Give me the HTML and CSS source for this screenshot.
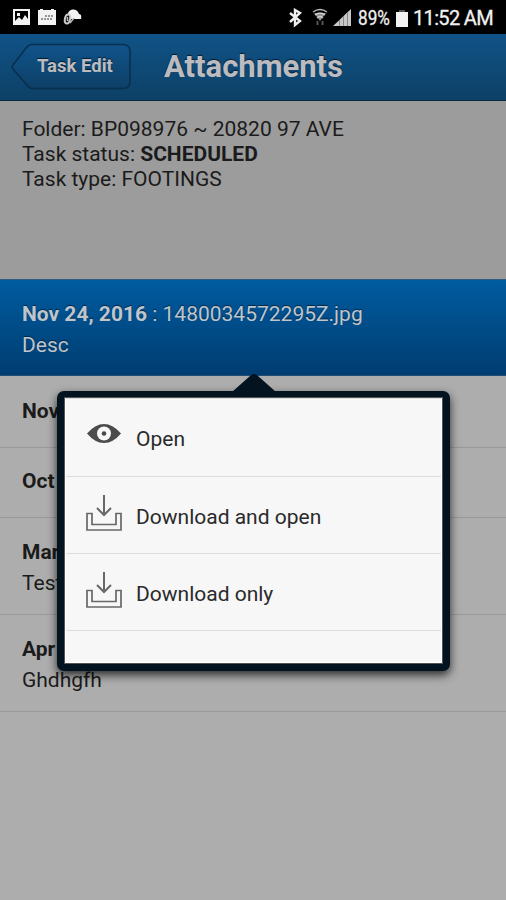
FILE: index.html
```html
<!DOCTYPE html>
<html lang="en">
<head>
<meta charset="utf-8">
<title>Attachments</title>
<link rel="stylesheet" href="styles.css">
</head>
<body>
<div class="screen">
  <div class="status">
    <svg class="status-left" width="72" height="20" viewBox="0 0 72 20">
      <path fill="#f2f2f2" fill-rule="evenodd" d="M0 0h17v16H0zM2 2v10l4-4 3 3 3-5 3 4V2zM4 4h3v3H4z"/>
      <path fill="#f2f2f2" d="M25 1h2V0h3v1h8V0h3v1h2v15H25z"/>
      <path stroke="#777" stroke-width="1.600" stroke-dasharray="2 1" d="M32 7h8M28 10h11"/>
      <path fill="#f2f2f2" d="M55 5c0-5 9-7 11 0q3 0 2 5H58z"/>
      <ellipse cx="54.500" cy="10" rx="2.600" ry="4.500" fill="#111" stroke="#ccc" stroke-width="2" transform="rotate(12 54.500 10)"/>
      <path fill="none" stroke="#bbb" stroke-width="1.500" d="M57 14l4-5M54.500 8v4"/>
    </svg>
    <div class="status-right">
      <svg width="62" height="20" viewBox="0 0 62 20">
        <path fill="none" stroke="#eee" stroke-width="2.400" d="M1 5l10 8-5 4V2l5 3L1 14"/>
        <path fill="none" stroke="#bbb" stroke-width="1.300" d="M24 4q7-5 14 0M26 7q5-4 10 0M28 10q3-3 6 0"/>
        <path fill="#ddd" d="M25 5h12l-6 8z" opacity=".65"/>
        <path stroke="#555" stroke-width="2" d="M28.500 13v4M33.500 13v4"/>
        <path fill="#c8c8c8" d="M44 18L62 1v17z"/>
        <path stroke="#888" stroke-width="1" d="M50.500 12v6M54.500 8v10M58.500 5v13"/>
      </svg>
      <span class="battery-text"><span class="condensed">89%</span></span>
      <svg class="battery" width="12" height="17" viewBox="0 0 12 17"><path fill="#555" d="M3 0h6v2H3z"/><path fill="#f2f2f2" d="M0 2h12v15H0z"/></svg>
      <span class="clock">11:52 AM</span>
    </div>
  </div>
  <header class="header">
    <div class="back">
      <svg class="back-shape" width="122" height="48" viewBox="0 0 122 48">
        <defs><linearGradient id="bg" x2="0" y2="1"><stop stop-color="#10538a"/><stop offset="1" stop-color="#0d4067"/></linearGradient></defs>
        <path d="M20.500 1.500H112q7 0 7 7v30q0 7-7 7H20.500Q18 45 15 41L2 26q-2-2 0-4L15 5q3-3.500 5.500-3.500z" fill="url(#bg)" stroke="#082f4d" stroke-width="1.500"/>
      </svg>
      <span class="back-label">Task Edit</span>
    </div>
    <h1 class="title">Attachments</h1>
  </header>
  <section class="info">
    <div>Folder: BP098976 ~ 20820 97 AVE</div>
    <div>Task status: <b>SCHEDULED</b></div>
    <div>Task type: FOOTINGS</div>
  </section>
  <main class="list">
    <div class="row selected">
      <div><b>Nov 24, 2016</b> : 1480034572295Z.jpg</div>
      <div>Desc</div>
    </div>
    <div class="row short"><b>Nov</b></div>
    <div class="row short second"><b>Oct</b></div>
    <div class="row third"><b>Mar</b><div>Test</div></div>
    <div class="row"><b>Apr</b><div>Ghdhgfh</div></div>
  </main>
  <div class="popup">
    <svg class="arrow" width="44" height="19" viewBox="0 0 44 19"><path fill="#03131f" d="M0 19L18 3q4-4 8 0l18 16z"/></svg>
    <div class="menu">
      <div class="item first">
        <svg class="icon" width="36" height="36" viewBox="0 0 36 36"><path fill="#4c4c4c" d="M1 15.500Q9 6 18 6t17 9.500Q27 25 18 25T1 15.500z"/><circle cx="18" cy="15.500" r="7" fill="#f7f7f7"/><circle cx="18" cy="15.500" r="2.300" fill="#484848"/></svg>
        <span>Open</span>
      </div>
      <div class="item">
        <svg class="icon" width="36" height="36" viewBox="0 0 36 36"><path fill="none" stroke="#686868" stroke-width="1.700" d="M1 17.500h5v11h24v-11h5V34H1z"/><path fill="none" stroke="#686868" stroke-width="2" d="M18-1v20M11 12l7 7 7-7"/></svg>
        <span>Download and open</span>
      </div>
      <div class="item">
        <svg class="icon" width="36" height="36" viewBox="0 0 36 36"><path fill="none" stroke="#686868" stroke-width="1.700" d="M1 17.500h5v11h24v-11h5V34H1z"/><path fill="none" stroke="#686868" stroke-width="2" d="M18-1v20M11 12l7 7 7-7"/></svg>
        <span>Download only</span>
      </div>
    </div>
  </div>
</div>
</body>
</html>
```
FILE: styles.css
```css
* { box-sizing: border-box; }
body { margin: 0; font-family: Roboto, sans-serif; font-size: 21px; color: #1b1b1b; background: #adadad; }
.screen { position: relative; width: 506px; height: 900px; overflow: hidden; background: #adadad; }
.status { height: 34px; background: #000; color: #f0f0f0; display: flex; align-items: flex-start; padding: 8px 13px 0; }
.status-left { margin-top: 1px; flex: none; }
.status-right { display: flex; margin-left: auto; align-items: flex-start; line-height: 21px; white-space: nowrap; }
.battery-text { margin-left: 7px; width: 34px; font-size: 20px; -webkit-text-stroke: .3px; }
.condensed { display: inline-block; transform: scaleX(.86); transform-origin: left; }
.battery { margin: 2px 5px 0 4px; }
.clock { font-size: 20px; width: 80px; letter-spacing: -.65px; -webkit-text-stroke: .3px; }
.header { height: 67px; display: flex; align-items: flex-start; color: #bcbcc0; background: linear-gradient(#105387, #0d4066); border-bottom: 1px solid #0a2944; padding: 9px 0 0 11px; text-shadow: 0 -1px 1px #041d31; }
.back { position: relative; width: 121px; height: 48px; }
.back-shape { display: block; }
.back-label { position: absolute; left: 26px; top: 12px; font-size: 18.5px; line-height: 22px; font-weight: 700; white-space: nowrap; }
.title { margin: 4px 0 0 32px; font-size: 31px; line-height: 40px; font-weight: 700; }
.info { height: 178px; background: #9c9c9c; padding: 15.500px 22px; line-height: 25.4px; white-space: nowrap; }
.list { line-height: 31px; }
.row { height: 97.5px; padding: 19px 22px 0; border-bottom: 1px solid #999; }
.selected { height: 97px; color: #bfc5cc; background: linear-gradient(#005ca0, #003c70); border-top: 1px solid #315a7c; border-bottom-color: #234e75; text-shadow: 0 -1px 1px #002746; }
.short { height: 72px; padding-top: 20px; }
.second { height: 69.500px; padding-top: 18px; }
.third { height: 97px; }
.popup { position: absolute; left: 57px; top: 391px; width: 393px; height: 280px; border: 8px solid #03131f; border-top-width: 7px; border-radius: 7px; background: #f7f7f7; box-shadow: 0 4px 10px rgba(0,0,0,.75); }
.arrow { position: absolute; left: 167px; top: -25px; }
.menu { height: 100%; border: 1px solid #fff; border-top-color: #ddd; box-shadow: 0 0 0 1px #555; }
.item { height: 77px; padding-left: 20px; display: flex; align-items: flex-start; border-bottom: 1px solid #dedede; color: #2a2a2a; line-height: 30px; white-space: nowrap; }
.first { height: 78px; }
.icon { margin: 19px 14px 0 0; flex: none; overflow: visible; }
.item span { margin-top: 25px; }
```
